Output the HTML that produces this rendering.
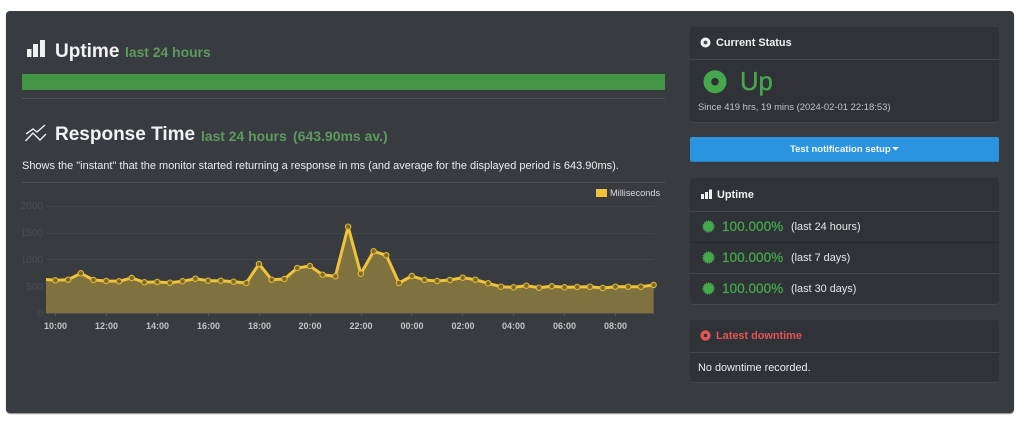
<!DOCTYPE html>
<html lang="en"><head><meta charset="utf-8"><title>Uptime</title>
<style>
html,body{margin:0;padding:0;background:#fff}
body{width:1024px;height:423px;position:relative;overflow:hidden;font-family:"Liberation Sans",Arial,sans-serif;color:#e4e4e4}
.a{position:absolute;white-space:nowrap}
#main{left:6px;top:11px;width:1008px;height:402px;background:#383b3f;border-radius:4px;box-shadow:0 1px 1px #888}
.h{font-weight:bold;font-size:19px;color:#f2f2f2;line-height:22px}
.g{font-weight:bold;font-size:13.9px;color:#5d9a5d;line-height:18px}
.hr{height:1px;background:#515151;left:22px;width:643px}
.p{left:690px;width:309px;background:#2f3236;border-radius:3px;box-shadow:0 1px 0 #44474b}
.l{left:690px;width:309px;height:1px;background:#45474a}
.t{font-weight:bold;font-size:10.9px;line-height:14px;color:#f0f0f0}
.pct{font-size:13.6px;color:#46a84c;line-height:16px;left:722px;-webkit-text-stroke:.25px #46a84c}
.sm{font-size:10.9px;color:#e8e8e8;line-height:14px;left:791px}
.ax{font-size:9px;fill:#c4c4c4;font-weight:bold;font-family:"Liberation Sans",Arial,sans-serif;text-anchor:middle}
.ay{font-size:10px;fill:#4b4e51;font-family:"Liberation Sans",Arial,sans-serif;text-anchor:end}
</style></head><body>
<div class="a" id="main"></div>

<svg class="a" style="left:27px;top:40px" width="18" height="18" viewBox="0 0 18 18"><path fill="#f0f0f0" d="M0 9h4.500v8H0zM6 4h5v13H6zM13 0h5v17h-5z"/></svg>
<div class="a h" style="left:55px;top:40.500px">Uptime</div>
<div class="a g" style="left:125px;top:43px">last 24 hours</div>
<div class="a" style="left:22px;top:73.500px;width:643px;height:16px;background:#439546"></div>
<div class="a hr" style="top:98px"></div>

<svg class="a" style="left:25px;top:124px" width="22" height="19" viewBox="0 0 22 19"><path fill="none" stroke="#eee" stroke-width="1.400" d="M1 10l7-5 4 3 8-7M0.500 17l7.500-8 7 7 6-6"/></svg>
<div class="a h" style="left:55px;top:124px">Response Time</div>
<div class="a g" style="left:201px;top:127px">last 24 hours</div>
<div class="a g" style="left:293px;top:127px;font-size:14px">(643.90ms av.)</div>
<div class="a" style="left:22px;top:158.500px;font-size:10.98px;line-height:14px;color:#ececec">Shows the "instant" that the monitor started returning a response in ms (and average for the displayed period is 643.90ms).</div>
<div class="a hr" style="top:182px"></div>

<svg class="a" style="left:0;top:0" width="680" height="340" viewBox="0 0 680 340">
<g stroke="#434649" stroke-width="1"><path d="M46 206.500H654M46 233.500H654M46 259.500H654M46 286.500H654"/></g>
<path d="M46 279.500L55.300 280.300 68.100 279.700 80.800 273.300 93.500 280 106.200 281 119 281.300 131.700 278 144.400 282.300 157.200 282 169.900 282.700 182.600 281.300 195.400 278.700 208.100 280.700 220.800 280.700 233.500 281.700 246.300 283 259 264 271.700 279.700 284.400 279 297.200 268 309.900 266 322.600 274.700 335.400 276.300 348.100 226.700 360.800 273.700 373.600 251.300 386.300 255.300 399 283 411.800 276 424.500 280 437.200 281 449.900 280 462.700 277.700 475.400 279.700 488.100 283.300 500.900 286.700 513.600 287.300 526.300 285.700 539 287.700 551.800 286.300 564.500 287.300 577.200 287 590 286.700 602.700 288 615.400 286.700 628.200 286.700 640.900 286.700 653.600 285V313H46Z" fill="#80723f"/>
<path d="M46 313.500H654" stroke="#55544a" stroke-width="1"/>
<path d="M55.500 313v3M106.500 313v3M157.500 313v3M208.500 313v3M259.500 313v3M310.500 313v3M361.500 313v3M411.500 313v3M462.500 313v3M513.500 313v3M564.500 313v3M615.500 313v3" stroke="#55585a"/>
<polyline fill="none" stroke="#f0c338" stroke-width="3" stroke-linejoin="round" points="46,279.500 55.300,280.300 68.100,279.700 80.800,273.300 93.500,280 106.200,281 119,281.300 131.700,278 144.400,282.300 157.200,282 169.900,282.700 182.600,281.300 195.400,278.700 208.100,280.700 220.800,280.700 233.500,281.700 246.300,283 259,264 271.700,279.700 284.400,279 297.200,268 309.900,266 322.600,274.700 335.400,276.300 348.100,226.700 360.800,273.700 373.600,251.300 386.300,255.300 399,283 411.800,276 424.500,280 437.200,281 449.900,280 462.700,277.700 475.400,279.700 488.100,283.300 500.900,286.700 513.600,287.300 526.300,285.700 539,287.700 551.800,286.300 564.500,287.300 577.200,287 590,286.700 602.700,288 615.400,286.700 628.200,286.700 640.900,286.700 653.600,285"/>
<g fill="#7a6a30" stroke="#e0b634" stroke-width="1.100">
<circle cx="55.300" cy="280.300" r="2.700"/><circle cx="68.100" cy="279.700" r="2.700"/><circle cx="80.800" cy="273.300" r="2.700"/><circle cx="93.500" cy="280" r="2.700"/><circle cx="106.200" cy="281" r="2.700"/><circle cx="119" cy="281.300" r="2.700"/><circle cx="131.700" cy="278" r="2.700"/><circle cx="144.400" cy="282.300" r="2.700"/><circle cx="157.200" cy="282" r="2.700"/><circle cx="169.900" cy="282.700" r="2.700"/><circle cx="182.600" cy="281.300" r="2.700"/><circle cx="195.400" cy="278.700" r="2.700"/><circle cx="208.100" cy="280.700" r="2.700"/><circle cx="220.800" cy="280.700" r="2.700"/><circle cx="233.500" cy="281.700" r="2.700"/><circle cx="246.300" cy="283" r="2.700"/><circle cx="259" cy="264" r="2.700"/><circle cx="271.700" cy="279.700" r="2.700"/><circle cx="284.400" cy="279" r="2.700"/><circle cx="297.200" cy="268" r="2.700"/><circle cx="309.900" cy="266" r="2.700"/><circle cx="322.600" cy="274.700" r="2.700"/><circle cx="335.400" cy="276.300" r="2.700"/><circle cx="348.100" cy="226.700" r="2.700"/><circle cx="360.800" cy="273.700" r="2.700"/><circle cx="373.600" cy="251.300" r="2.700"/><circle cx="386.300" cy="255.300" r="2.700"/><circle cx="399" cy="283" r="2.700"/><circle cx="411.800" cy="276" r="2.700"/><circle cx="424.500" cy="280" r="2.700"/><circle cx="437.200" cy="281" r="2.700"/><circle cx="449.900" cy="280" r="2.700"/><circle cx="462.700" cy="277.700" r="2.700"/><circle cx="475.400" cy="279.700" r="2.700"/><circle cx="488.100" cy="283.300" r="2.700"/><circle cx="500.900" cy="286.700" r="2.700"/><circle cx="513.600" cy="287.300" r="2.700"/><circle cx="526.300" cy="285.700" r="2.700"/><circle cx="539" cy="287.700" r="2.700"/><circle cx="551.800" cy="286.300" r="2.700"/><circle cx="564.500" cy="287.300" r="2.700"/><circle cx="577.200" cy="287" r="2.700"/><circle cx="590" cy="286.700" r="2.700"/><circle cx="602.700" cy="288" r="2.700"/><circle cx="615.400" cy="286.700" r="2.700"/><circle cx="628.200" cy="286.700" r="2.700"/><circle cx="640.900" cy="286.700" r="2.700"/><circle cx="653.600" cy="285" r="2.700"/>
</g>
<text class="ay" x="43" y="209">2000</text><text class="ay" x="43" y="236">1500</text><text class="ay" x="43" y="263">1000</text><text class="ay" x="43" y="290">500</text><text class="ay" x="43" y="317">0</text>
<text class="ax" x="55.500" y="329">10:00</text><text class="ax" x="106.500" y="329">12:00</text><text class="ax" x="157.500" y="329">14:00</text><text class="ax" x="208.500" y="329">16:00</text><text class="ax" x="259.500" y="329">18:00</text><text class="ax" x="310" y="329">20:00</text><text class="ax" x="361" y="329">22:00</text><text class="ax" x="412" y="329">00:00</text><text class="ax" x="463" y="329">02:00</text><text class="ax" x="513.500" y="329">04:00</text><text class="ax" x="564.500" y="329">06:00</text><text class="ax" x="615.500" y="329">08:00</text>
</svg>
<div class="a" style="left:596px;top:189px;width:11px;height:8px;background:#f0c338"></div>
<div class="a" style="left:610px;top:187px;font-size:9.200px;line-height:12px;color:#d8dce0">Milliseconds</div>

<!-- Current status -->
<div class="a p" style="top:27px;height:95px"></div>
<div class="a l" style="top:59px"></div>
<svg class="a" style="left:700px;top:37px" width="11" height="11" viewBox="0 0 11 11"><circle cx="5.500" cy="5.500" r="5" fill="#f2f2f2"/><circle cx="5.500" cy="5.500" r="1.900" fill="#4a4c50"/></svg>
<div class="a t" style="left:716px;top:35.500px">Current Status</div>
<svg class="a" style="left:703px;top:70px" width="25" height="25" viewBox="0 0 25 25"><circle cx="12" cy="11.700" r="11.500" fill="#46a84c"/><circle cx="12" cy="11.700" r="3.800" fill="#2f3236"/></svg>
<div class="a" style="left:740px;top:67px;font-size:25.700px;line-height:30px;color:#46a84c;-webkit-text-stroke:.35px #46a84c">Up</div>
<div class="a" style="left:698px;top:100.500px;font-size:9.450px;line-height:13px;color:#c2c4c6">Since 419 hrs, 19 mins (2024-02-01 22:18:53)</div>

<!-- Button -->
<div class="a" style="left:690px;top:137px;width:309px;height:25px;background:#2b94e0;border-radius:2px;box-shadow:inset 0 -1px 0 #2580c0"></div>
<div class="a" style="left:790px;top:143px;font-size:9.500px;font-weight:bold;line-height:13px;color:#f2f6fa">Test notification setup</div>
<svg class="a" style="left:892px;top:147px" width="7" height="4" viewBox="0 0 7 4"><path fill="#f2f6fa" d="M0 0h7L3.500 3.500z"/></svg>

<!-- Uptime -->
<div class="a p" style="top:178px;height:126px"></div>
<div class="a l" style="top:211px"></div>
<div class="a l" style="top:242px;background:#26282b"></div>
<div class="a l" style="top:273px"></div>
<svg class="a" style="left:701px;top:189px" width="11" height="11" viewBox="0 0 11 11"><path fill="#f0f0f0" d="M0 5h3v5H0zM4 3h3v7H4zM8 0.500h3V10H8z"/></svg>
<div class="a t" style="left:717px;top:187.500px">Uptime</div>

<svg class="a" style="left:702px;top:220px" width="13" height="13" viewBox="0 0 13 13"><circle cx="6.500" cy="6.500" r="5.200" fill="#46a84c"/><circle cx="6.500" cy="6.500" r="5.500" fill="none" stroke="#46a84c" stroke-width="1.300" stroke-dasharray="1.300 1"/></svg>
<div class="a pct" style="top:218.500px">100.000%</div><div class="a sm" style="top:219.500px">(last 24 hours)</div>
<svg class="a" style="left:702px;top:251px" width="13" height="13" viewBox="0 0 13 13"><circle cx="6.500" cy="6.500" r="5.200" fill="#46a84c"/><circle cx="6.500" cy="6.500" r="5.500" fill="none" stroke="#46a84c" stroke-width="1.300" stroke-dasharray="1.300 1"/></svg>
<div class="a pct" style="top:249.500px">100.000%</div><div class="a sm" style="top:250.500px">(last 7 days)</div>
<svg class="a" style="left:702px;top:282px" width="13" height="13" viewBox="0 0 13 13"><circle cx="6.500" cy="6.500" r="5.200" fill="#46a84c"/><circle cx="6.500" cy="6.500" r="5.500" fill="none" stroke="#46a84c" stroke-width="1.300" stroke-dasharray="1.300 1"/></svg>
<div class="a pct" style="top:280.500px">100.000%</div><div class="a sm" style="top:281.500px">(last 30 days)</div>

<!-- Latest downtime -->
<div class="a p" style="top:320px;height:62px"></div>
<div class="a l" style="top:352px"></div>
<svg class="a" style="left:700px;top:330px" width="11" height="11" viewBox="0 0 11 11"><circle cx="5.500" cy="5.500" r="5.200" fill="#e15554"/><circle cx="5.500" cy="5.500" r="1.700" fill="#2f3236"/></svg>
<div class="a t" style="left:716px;top:328.500px;color:#e15554">Latest downtime</div>
<div class="a" style="left:698px;top:360.500px;font-size:10.900px;line-height:14px;color:#ececec">No downtime recorded.</div>
</body></html>
